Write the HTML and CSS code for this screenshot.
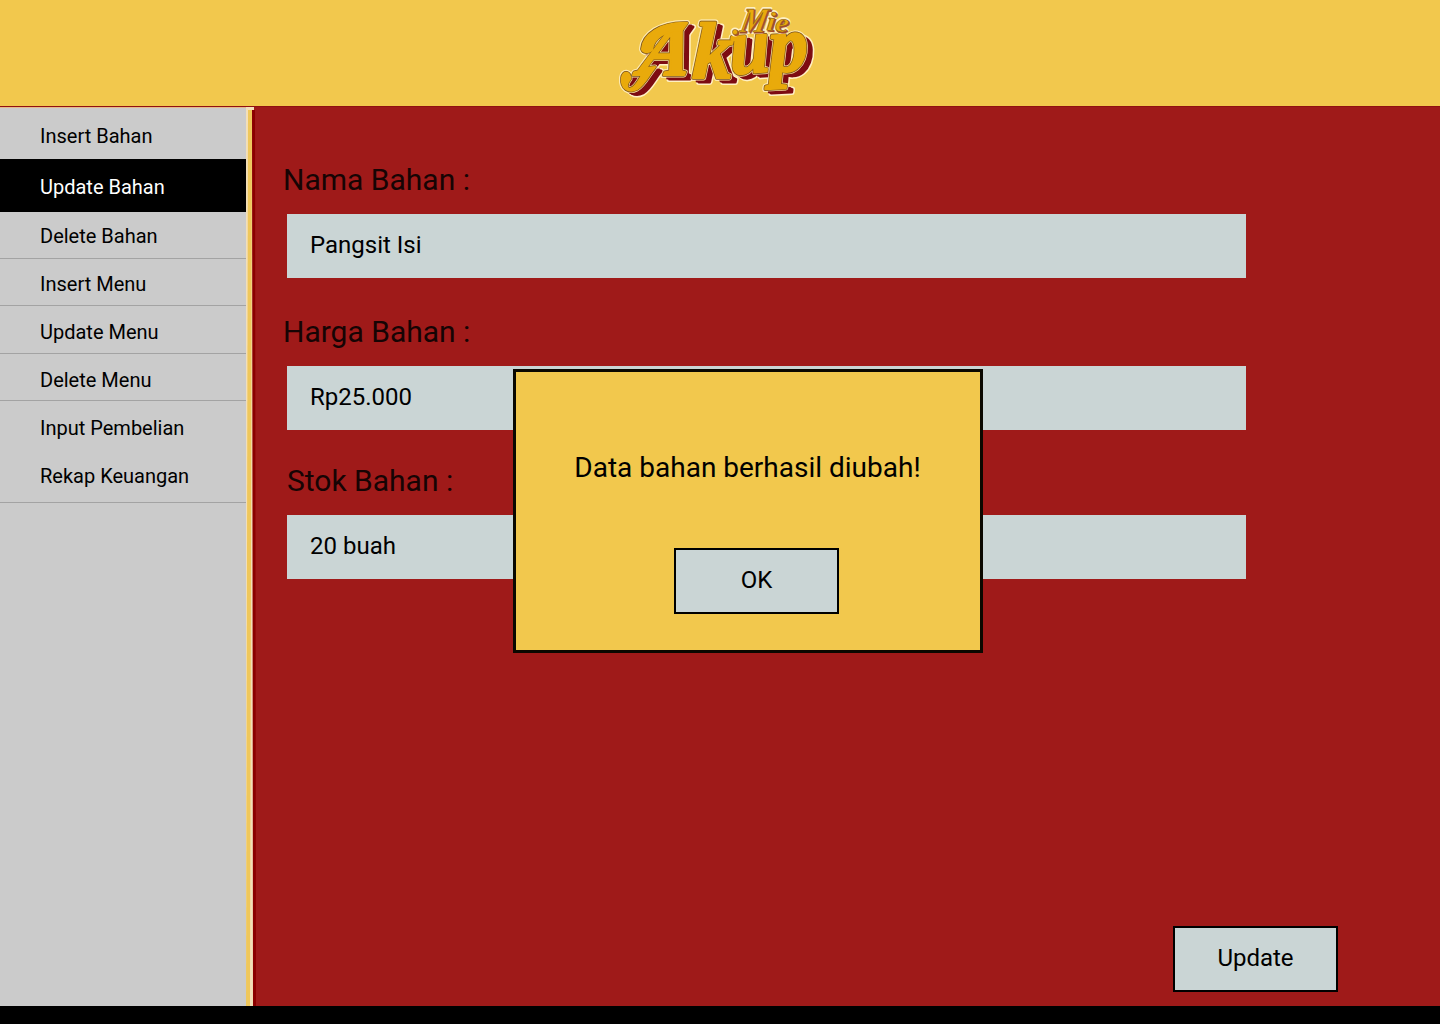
FILE: index.html
```
<!DOCTYPE html>
<html lang="id">
<head>
<meta charset="utf-8">
<title>Mie Akup - Update Bahan</title>
<link rel="stylesheet" href="styles.css">
</head>
<body>
<header class="header">
  <svg class="logo" viewBox="616 0 208 104" width="208" height="104" role="img" aria-label="Mie Akup">
    <defs>
      <g id="word">
        <text class="word" transform="translate(637 75) skewX(-12)" font-size="76">A</text>
        <text class="word" transform="translate(692 78) skewX(-2)" font-size="80" textLength="40" lengthAdjust="spacingAndGlyphs">k</text>
        <text class="word" transform="translate(731 74) rotate(-4)" font-size="80" textLength="40" lengthAdjust="spacingAndGlyphs">u</text>
        <text class="word" transform="translate(770 72) rotate(-3)" font-size="79" textLength="39" lengthAdjust="spacingAndGlyphs">p</text>
        <path d="M687 23C660 22 643 35 642 49C643 53 649 53 652 50C653 38 665 30 682 30ZM646 68C640 79 635 89 629 89C626 88 626 84 630 79C631 72 623 70 622 78C621 89 629 93 637 89C645 84 649 74 655 67Z"/>
      </g>
      <g id="small">
        <text class="word" transform="translate(739 32) skewX(-12)" font-size="35" textLength="26" lengthAdjust="spacingAndGlyphs">M</text>
        <text class="word" transform="translate(766 30) rotate(6)" font-size="27" textLength="22" lengthAdjust="spacingAndGlyphs">ie</text>
        <circle cx="735" cy="32" r="2.6"/>
      </g>
    </defs>
    <use href="#word" class="halo"/>
    <use href="#word" class="halo" x="6" y="4"/>
    <use href="#word" class="shade" x="6" y="4"/>
    <use href="#word" class="shade" x="4" y="3"/>
    <use href="#word" class="rim"/>
    <use href="#word" class="outline"/>
    <use href="#word" class="face"/>
    <use href="#small" class="halo-small"/>
    <use href="#small" class="shade-small" x="1.2" y="1"/>
    <use href="#small" class="face-small"/>
  </svg>
</header>
<div class="layout">
  <nav class="sidebar">
    <a class="item insert-bahan">Insert Bahan</a>
    <a class="item active">Update Bahan</a>
    <a class="item delete-bahan lined">Delete Bahan</a>
    <a class="item insert-menu lined">Insert Menu</a>
    <a class="item update-menu lined">Update Menu</a>
    <a class="item delete-menu lined">Delete Menu</a>
    <a class="item pembelian">Input Pembelian</a>
    <a class="item keuangan lined">Rekap Keuangan</a>
  </nav>
  <svg class="edge" viewBox="0 0 10 899" width="10" height="899" aria-hidden="true">
    <path fill="#8b0000" d="M6 3H9L10 899H7Z"/>
    <path fill="#f3dfb8" d="M0 0H8V3H6L7 899H0Z"/>
    <path fill="#efc75b" d="M2 3H6L4 899H0Z"/>
  </svg>
  <main class="content">
    <form class="form">
      <label class="label">Nama Bahan :</label>
      <div class="field">Pangsit Isi</div>
      <label class="label label-harga">Harga Bahan :</label>
      <div class="field">Rp25.000</div>
      <label class="label label-stok">Stok Bahan :</label>
      <div class="field">20 buah</div>
    </form>
    <button class="button update" type="button">Update</button>
  </main>
</div>
<footer class="footer"></footer>
<section class="dialog" role="dialog">
  <p class="message">Data bahan berhasil diubah!</p>
  <button class="button ok" type="button">OK</button>
</section>
</body>
</html>
```
FILE: styles.css
```
* { box-sizing: border-box; }
body {
  margin: 0;
  width: 1440px;
  height: 1024px;
  display: flex;
  flex-direction: column;
  overflow: hidden;
  background: #9f1a19;
  color: #000;
  font-family: Roboto, sans-serif;
}
.header {
  height: 107px;
  flex: none;
  padding-left: 616px;
  background: #f2c84d;
  border-bottom: 1px solid #8f1111;
}
.logo { display: block; }
.word { font-family: "Liberation Serif", serif; font-weight: bold; font-style: italic; }
.halo { fill: #fff0c4; stroke: #fff0c4; stroke-width: 6; stroke-linejoin: round; }
.shade { fill: #7d0c12; stroke: #7d0c12; stroke-width: 3; stroke-linejoin: round; }
.rim { fill: #fbe3a0; stroke: #fbe3a0; stroke-width: 5; stroke-linejoin: round; }
.outline { fill: #79511b; stroke: #79511b; stroke-width: 3.6; stroke-linejoin: round; }
.face { fill: #e9aa0b; stroke: #e9aa0b; stroke-width: 2.2; stroke-linejoin: round; }
.halo-small { fill: #fff0c4; stroke: #fff0c4; stroke-width: 4; stroke-linejoin: round; }
.shade-small { fill: #a44a28; stroke: #a44a28; stroke-width: 1; }
.face-small { fill: #e9aa0b; stroke: #8a5a1e; stroke-width: .6; }

.layout { display: flex; height: 899px; flex: none; }
.sidebar {
  width: 246px;
  background: #cbcbcb;
  border-top: 1px solid #e6b98a;
}
.item {
  display: block;
  height: 47px;
  padding-left: 40px;
  font-size: 20px;
  line-height: 24px;
}
.lined { border-bottom: 1px solid #a3a3a3; }
.insert-bahan { height: 51px; padding-top: 16px; }
.active { height: 53px; padding-top: 16px; background: #000; color: #fff; }
.delete-bahan { padding-top: 12px; }
.insert-menu { padding-top: 13px; }
.update-menu { height: 48px; padding-top: 14px; }
.delete-menu { padding-top: 14px; }
.pembelian { padding-top: 15px; }
.keuangan { height: 55px; padding-top: 16px; }
.edge { flex: none; }
.content {
  flex: 1;
  display: flex;
  flex-direction: column;
  justify-content: space-between;
  padding: 55px 102px 14px 27px;
}
.form { display: flex; flex-direction: column; width: 963px; }
.label {
  height: 52px;
  font-size: 30px;
  line-height: 36px;
  color: #160404;
}
.label-harga { margin-top: 36px; }
.label-stok { margin-top: 33px; padding-left: 4px; }
.field {
  height: 64px;
  margin-left: 4px;
  padding-left: 23px;
  background: #cad5d5;
  font-size: 24px;
  line-height: 62px;
}
.button {
  width: 165px;
  height: 66px;
  padding: 0 0 2px;
  border: 2px solid #000;
  border-radius: 0;
  background: #cad5d5;
  color: #000;
  font: 24px/60px Roboto, sans-serif;
}
.update { align-self: flex-end; }
.footer { height: 18px; flex: none; background: #000; }
.dialog {
  position: absolute;
  left: 513px;
  top: 369px;
  width: 470px;
  height: 284px;
  padding: 76px 1px 0 0;
  display: flex;
  flex-direction: column;
  align-items: center;
  border: 3px solid #0b0800;
  background: #f2c84d;
}
.message { margin: 0; font-size: 28px; line-height: 40px; }
.ok { margin: 60px 0 0 18px; }
```
